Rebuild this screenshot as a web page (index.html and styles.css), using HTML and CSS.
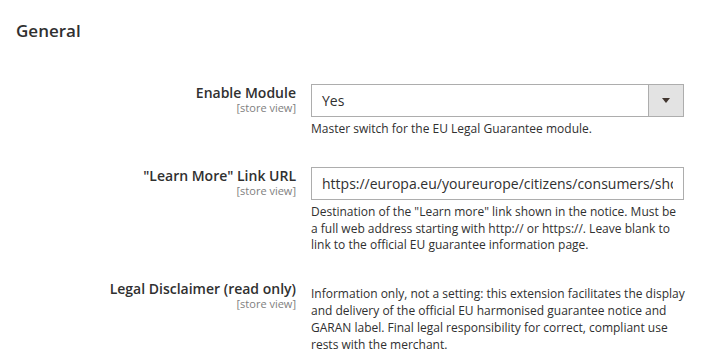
FILE: index.html
```html
<!DOCTYPE html>
<html lang="en">
<head>
<meta charset="utf-8">
<title>General</title>
<link rel="stylesheet" href="styles.css">
</head>
<body>
<div class="section">
  <h2 class="section-title">General</h2>
  <div class="fields">
    <div class="row row-first">
      <div class="label-col">
        <div class="label">Enable Module</div>
        <div class="scope">[store view]</div>
      </div>
      <div class="control-col">
        <div class="select">
          <span class="select-value">Yes</span>
          <span class="select-arrow"><span class="triangle"></span></span>
        </div>
        <div class="note">Master switch for the EU Legal Guarantee module.</div>
      </div>
    </div>
    <div class="row row-second">
      <div class="label-col">
        <div class="label">"Learn More" Link URL</div>
        <div class="scope">[store view]</div>
      </div>
      <div class="control-col">
        <div class="input"><span class="input-value">https://europa.eu/youreurope/citizens/consumers/shopping/guarantees-complaints/index_en.htm</span></div>
        <div class="note">Destination of the "Learn more" link shown in the notice. Must be a full web address starting with http:// or https://. Leave blank to link to the official EU guarantee information page.</div>
      </div>
    </div>
    <div class="row row-third">
      <div class="label-col">
        <div class="label">Legal Disclaimer (read only)</div>
        <div class="scope">[store view]</div>
      </div>
      <div class="control-col">
        <div class="value">Information only, not a setting: this extension facilitates the display and delivery of the official EU harmonised guarantee notice and GARAN label. Final legal responsibility for correct, compliant use rests with the merchant.</div>
      </div>
    </div>
  </div>
</div>
</body>
</html>
```
FILE: styles.css
```css
html, body {
  margin: 0;
  padding: 0;
  background: #ffffff;
}
body {
  font-family: "Open Sans", "DejaVu Sans", sans-serif;
  color: #303030;
  width: 726px;
  height: 359px;
  overflow: hidden;
}
.section {
  padding: 21px 0 0 16px;
}
.section-title {
  margin: 0;
  font-size: 17px;
  font-weight: 600;
  line-height: 20px;
  color: #303030;
}
.fields {
  margin-top: 43px;
  margin-left: -16px;
  display: flex;
  flex-direction: column;
}
.row {
  display: flex;
  align-items: flex-start;
  column-gap: 15px;
}
.row-first { margin-bottom: 29px; }
.row-second { margin-bottom: 26px; }
.label-col {
  width: 296px;
  text-align: right;
  flex: none;
}
.label {
  font-size: 14px;
  font-weight: 600;
  line-height: 17px;
  color: #303030;
}
.scope {
  font-size: 11px;
  line-height: 13px;
  color: #808080;
}
.control-col {
  width: 373px;
  flex: none;
}
.select, .input {
  box-sizing: border-box;
  height: 33px;
  border: 1px solid #adadad;
  display: flex;
  align-items: center;
  font-size: 14px;
  color: #303030;
  background: #ffffff;
  overflow: hidden;
}
.select-value {
  flex: 1;
  padding-left: 10px;
}
.select-arrow {
  width: 34px;
  height: 100%;
  background: #e3e3e3;
  border-left: 1px solid #adadad;
  display: flex;
  align-items: center;
  justify-content: center;
}
.triangle {
  width: 0;
  height: 0;
  border-left: 4px solid transparent;
  border-right: 4px solid transparent;
  border-top: 5px solid #41362f;
}
.input {
  padding: 0 10px;
}
.input-value {
  flex: 1;
  min-width: 0;
  overflow: hidden;
  white-space: nowrap;
}
.note {
  margin-top: 4px;
  font-size: 12px;
  line-height: 16.8px;
  color: #303030;
}
.value {
  padding-top: 6px;
  margin-right: -4px;
  font-size: 12px;
  line-height: 16.8px;
  color: #303030;
}
```
